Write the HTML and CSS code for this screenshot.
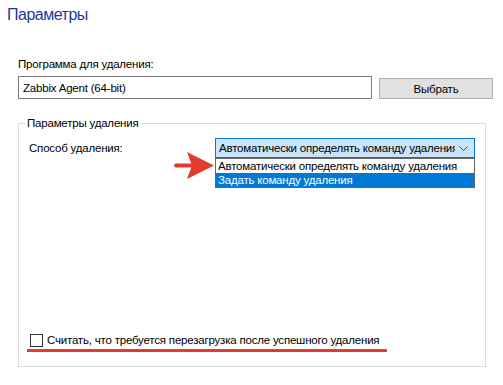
FILE: index.html
```html
<!DOCTYPE html>
<html lang="ru">

<head>
    <meta charset="UTF-8">
    <title>Параметры</title>
    <link rel="stylesheet" href="styles.css">
</head>

<body>
    <div class="page">
        <h1 class="title">Параметры</h1>

        <!-- Program to uninstall -->
        <label class="field-label" for="program">Программа для удаления:</label>
        <div class="program-row">
            <input type="text" id="program" class="text-input" value="Zabbix Agent (64-bit)">
            <button type="button" class="btn">Выбрать</button>
        </div>

        <!-- Uninstall options group -->
        <fieldset class="group">
            <legend class="group-title">Параметры удаления</legend>
            <div class="group-body">
                <div class="method-row">
                    <span class="method-label">Способ удаления:</span>
                    <div class="combo-wrap">
                        <div class="combo">
                            <span class="combo-text">Автоматически определять команду удаления</span>
                            <svg class="chevron" width="9" height="5" viewBox="0 0 9 5">
                                <path d="M0.5 0.5 L4.5 4.5 L8.5 0.5" fill="none" stroke="#444" stroke-width="1"/>
                            </svg>
                        </div>
                        <ul class="combo-list">
                            <li class="combo-item">Автоматически определять команду удаления</li>
                            <li class="combo-item active">Задать команду удаления</li>
                        </ul>
                        <svg class="pointer" width="42" height="30" viewBox="0 0 42 30">
                            <path d="M2 12.5 L18 12.5 L18 16.5 L2 16.5 Z" fill="#e33b2e"/>
                            <circle cx="2" cy="14.5" r="2" fill="#e33b2e"/>
                            <path d="M13 1 L40 14.5 L13 28 L18 14.5 Z" fill="#e33b2e"/>
                        </svg>
                    </div>
                </div>

                <label class="check-row">
                    <span class="checkbox"></span>
                    <span>Считать, что требуется перезагрузка после успешного удаления</span>
                </label>
            </div>
        </fieldset>
    </div>
</body>

</html>
```

FILE: styles.css
```css
/* General */
body {
    margin: 0;
    background: #ffffff;
    font-family: 'Liberation Sans', Arial, sans-serif;
    font-size: 11.5px;
    letter-spacing: -0.2px;
    color: #000000;
}

.page {
    padding: 5px 10px 0 18px;
}

/* Title */
.title {
    margin: 0 0 0 -11px;
    font-size: 16px;
    line-height: 20px;
    letter-spacing: -0.5px;
    font-weight: normal;
    color: #1c3a9c;
}

/* Program row */
.field-label {
    display: block;
    margin-top: 31px;
    line-height: 16px;
}

.program-row {
    display: flex;
    align-items: center;
    gap: 7px;
    margin-top: 4px;
}

.text-input {
    width: 354px;
    height: 23px;
    box-sizing: border-box;
    margin: 0;
    padding: 0 4px;
    border: 1px solid #7a7a7a;
    font-family: inherit;
    font-size: 11.5px;
    letter-spacing: -0.2px;
    color: #000000;
    outline: none;
}

.btn {
    width: 114px;
    height: 21px;
    margin-top: 2px;
    padding: 0;
    border: 1px solid #adadad;
    background: #e1e1e1;
    font-family: inherit;
    font-size: 11.5px;
    letter-spacing: -0.2px;
    color: #000000;
}

/* Group box */
.group {
    width: 468px;
    box-sizing: border-box;
    margin: 16px 0 0 0;
    padding: 7px 10px 14px 10px;
    border: 1px solid #dcdcdc;
}

.group-title {
    margin-left: -4px;
    padding: 0 2px;
    line-height: 16px;
}

.group-body {
    display: flex;
    flex-direction: column;
    height: 214px;
}

.method-row {
    display: flex;
    align-items: center;
}

.method-label {
    width: 186px;
    line-height: 16px;
}

.combo-wrap {
    position: relative;
}

.combo {
    display: flex;
    align-items: center;
    width: 260px;
    height: 20px;
    box-sizing: border-box;
    padding: 0 6px 0 3px;
    border: 1px solid #0078d7;
    background: #cce4f7;
}

.combo-text {
    flex: 1;
    overflow: hidden;
    white-space: nowrap;
}

.chevron {
    margin-left: 4px;
}

/* Open drop-down list */
.combo-list {
    position: absolute;
    top: 20px;
    left: 0;
    width: 260px;
    box-sizing: border-box;
    margin: 0;
    padding: 0;
    list-style: none;
    border: 1px solid #646464;
    background: #ffffff;
}

.combo-item {
    height: 14px;
    line-height: 14px;
    padding-left: 2px;
    white-space: nowrap;
}

.combo-item.active {
    background: #0078d7;
    color: #ffffff;
}

/* Red annotation arrow */
.pointer {
    position: absolute;
    top: 13px;
    left: -41px;
}

/* Checkbox row */
.check-row {
    display: flex;
    align-items: center;
    gap: 4px;
    width: 360px;
    box-sizing: border-box;
    margin: auto 0 0 -2px;
    padding: 0 0 1px 3px;
    border-bottom: 3px solid #e33b2e;
    line-height: 16px;
    white-space: nowrap;
}

.checkbox {
    flex: none;
    width: 13px;
    height: 13px;
    box-sizing: border-box;
    border: 1px solid #333333;
    background: #ffffff;
}
```
